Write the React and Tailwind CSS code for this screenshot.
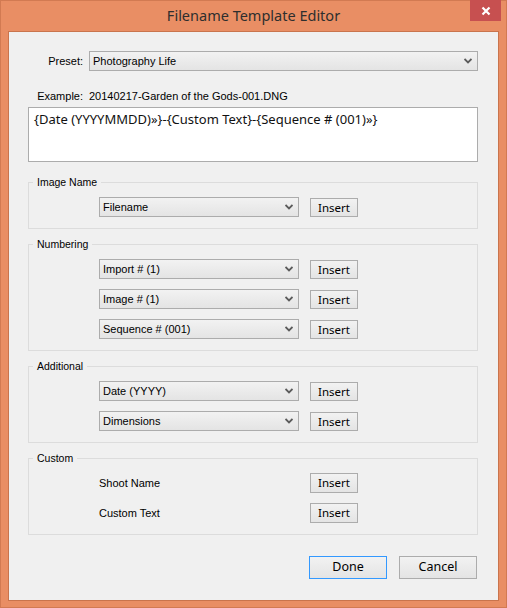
import React from "react";

const UI = { fontFamily: '"Segoe UI", "Noto Sans", sans-serif' };
const SMALL = { fontFamily: '"Tahoma", "Liberation Sans", sans-serif' };

function Chevron() {
  return (
    <svg width="8" height="6" viewBox="0 0 8 6" className="shrink-0">
      <path d="M0.5 1 L4 4.5 L7.5 1" fill="none" stroke="#5a5a5a" strokeWidth="1.8" />
    </svg>
  );
}

function Select({ value, wide }) {
  return (
    <div
      className={
        "h-[20px] flex items-center justify-between pl-[3px] pr-[5px] border border-[#acacac] bg-gradient-to-b from-[#f2f2f2] to-[#e4e4e4] text-[11px] text-black " +
        (wide ? "flex-1" : "w-[200px]")
      }
      style={SMALL}
    >
      <span className="leading-none">{value}</span>
      <Chevron />
    </div>
  );
}

function Btn({ children, primary, className = "" }) {
  return (
    <button
      className={
        "flex items-center justify-center border bg-gradient-to-b from-[#f2f2f2] to-[#e4e4e4] text-black " +
        (primary ? "border-[#3399ff] " : "border-[#acacac] ") +
        className
      }
      style={UI}
    >
      {children}
    </button>
  );
}

function Row({ value }) {
  return (
    <div className="flex items-start gap-[11px]">
      <Select value={value} />
      <Btn className="mt-[1px] w-[48px] h-[19px] text-[11.5px]">Insert</Btn>
    </div>
  );
}

function LabelRow({ label }) {
  return (
    <div className="flex items-center gap-[11px] h-[20px]">
      <div className="w-[200px] text-[11px] text-black" style={SMALL}>{label}</div>
      <Btn className="w-[48px] h-[20px] text-[11.5px]">Insert</Btn>
    </div>
  );
}

function Group({ title, children, className = "" }) {
  return (
    <fieldset className={"border border-[#dcdcdc] " + className}>
      <legend className="ml-[4px] px-[4px] text-[10.5px] leading-[13px] text-black" style={SMALL}>
        {title}
      </legend>
      <div className="flex flex-col gap-[10px] pl-[70px] pt-[8px] pb-[11px]">{children}</div>
    </fieldset>
  );
}

export default function App() {
  return (
    <div
      className="w-[507px] h-[608px] bg-[#e98e64] border border-[#d27a52] flex flex-col select-none"
      style={UI}
    >
      {/* title bar */}
      <div className="relative h-[30px] flex items-center justify-center shrink-0">
        <span className="text-[14.5px] text-[#2e2e2e]">Filename Template Editor</span>
        <div className="absolute right-[5px] top-[-1px] w-[31px] h-[21px] bg-[#c75050] flex items-center justify-center">
          <svg width="10" height="10" viewBox="0 0 10 10">
            <path d="M1.5 1.5 L8.5 8.5 M8.5 1.5 L1.5 8.5" stroke="#fff" strokeWidth="2.2" />
          </svg>
        </div>
      </div>

      {/* client area */}
      <div className="mx-[7px] h-[570px] border border-[#c9744d] bg-[#f0f0f0] pl-[19px] pr-[20px] pt-[19px] flex flex-col">
        <div className="flex items-center gap-[6px]">
          <div className="w-[55px] text-right text-[11px] text-black" style={SMALL}>Preset:</div>
          <Select value="Photography Life" wide />
        </div>

        <div className="flex items-center gap-[6px] mt-[18px] h-[14px]" style={SMALL}>
          <div className="w-[55px] text-right text-[11px] text-black">Example:</div>
          <div className="text-[11px] text-black">20140217-Garden of the Gods-001.DNG</div>
        </div>

        <div className="mt-[4px] h-[55px] bg-white border border-[#acacac] px-[5px] pt-[2px] text-[13px] text-[#111]">
          {"{Date (YYYYMMDD)»}-{Custom Text}-{Sequence # (001)»}"}
        </div>

        <Group title="Image Name" className="mt-[14px]">
          <Row value="Filename" />
        </Group>

        <Group title="Numbering" className="mt-[9px]">
          <Row value="Import # (1)" />
          <Row value="Image # (1)" />
          <Row value="Sequence # (001)" />
        </Group>

        <Group title="Additional" className="mt-[9px]">
          <Row value="Date (YYYY)" />
          <Row value="Dimensions" />
        </Group>

        <Group title="Custom" className="mt-[9px]">
          <LabelRow label="Shoot Name" />
          <LabelRow label="Custom Text" />
        </Group>

        <div className="mt-[21px] flex justify-end gap-[12px] pr-[1px]">
          <Btn primary className="w-[78px] h-[23px] text-[12.5px]">Done</Btn>
          <Btn className="w-[78px] h-[23px] text-[12.5px]">Cancel</Btn>
        </div>
      </div>
    </div>
  );
}
